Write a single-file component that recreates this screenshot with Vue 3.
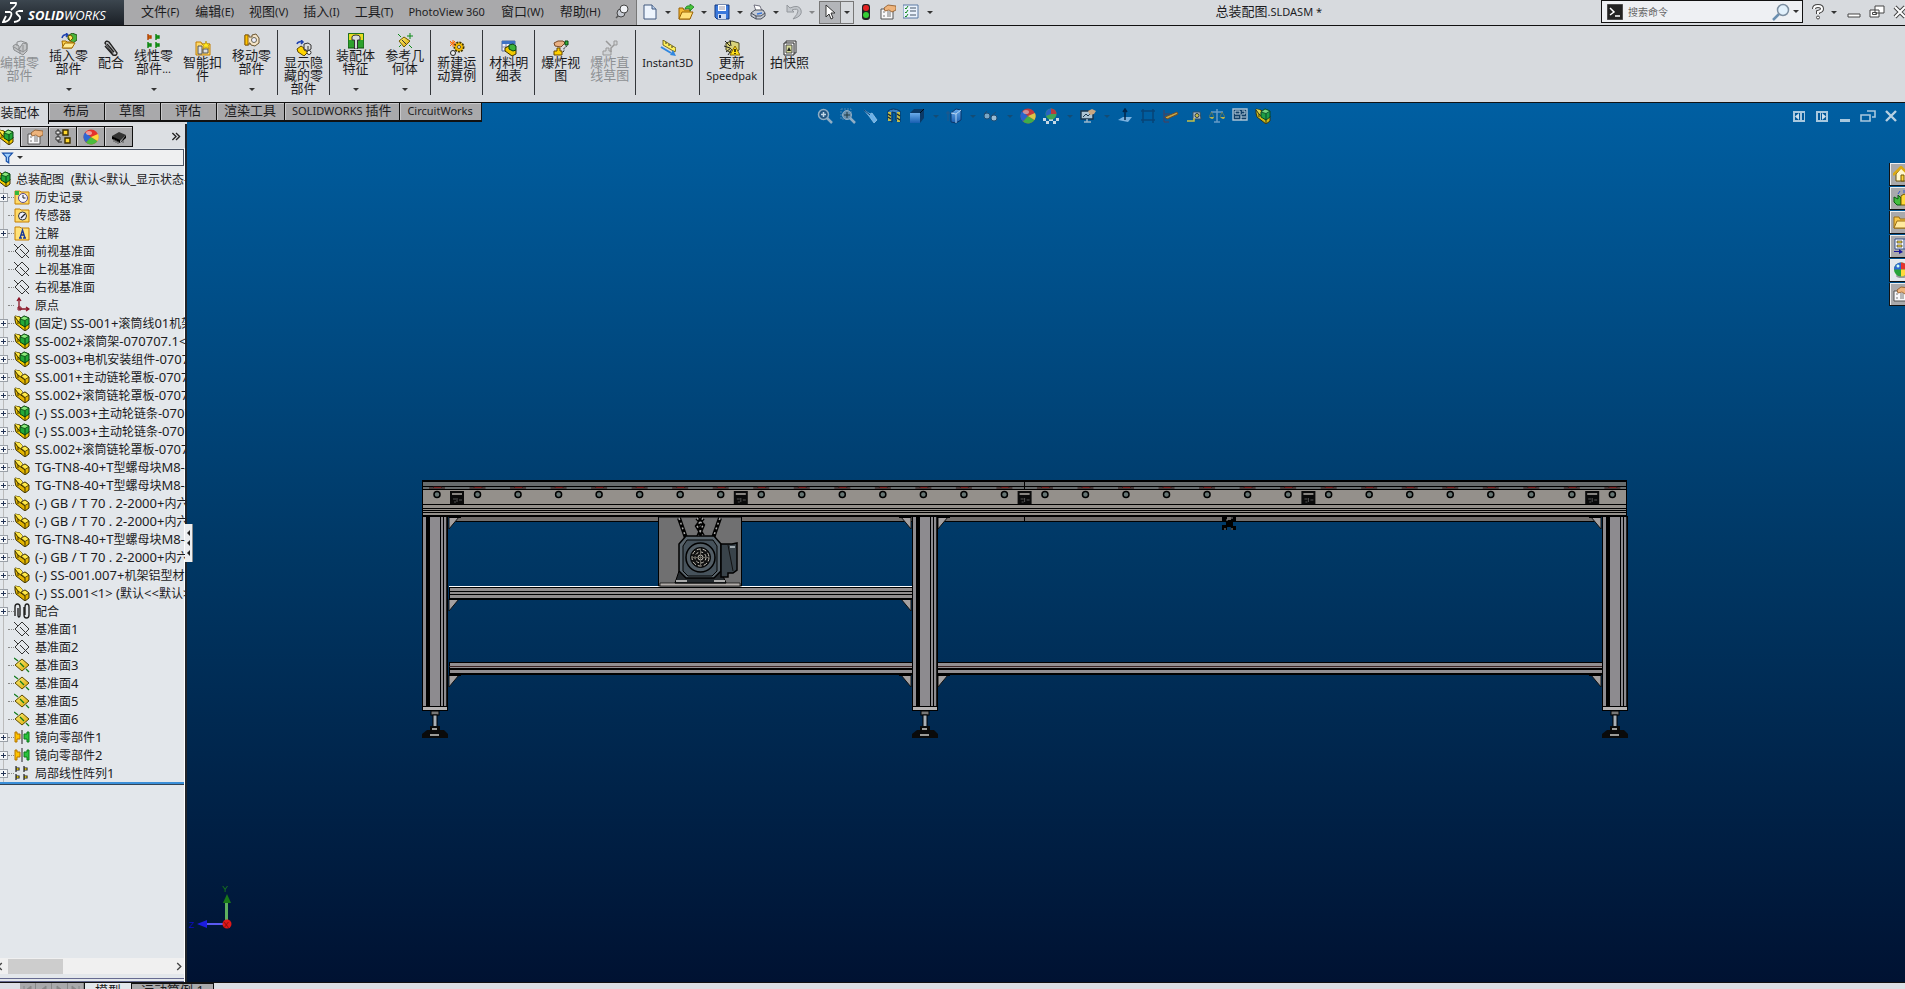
<script setup>
import { h } from 'vue'

// Splits a label into Latin and Chinese runs so that each can carry its own size.
const Label = (props) =>
  h('span', { class: 'label' },
    (props.text.match(/[\x20-\x7e]+|[^\x20-\x7e]+/g) || []).map((run) =>
      /^[\x20-\x7e]/.test(run) ? h('span', { class: 'latin' }, run) : run))
Label.props = ['text']

const menus = ['文件(F)', '编辑(E)', '视图(V)', '插入(I)', '工具(T)', 'PhotoView 360', '窗口(W)', '帮助(H)']

const quick = [
  { icon: 'new', name: '新建' }, { icon: 'open', name: '打开' }, { icon: 'save', name: '保存' },
  { icon: 'print', name: '打印' }, { icon: 'undo', name: '撤销', dim: true }
]

const ribbon = [
  [
    { icon: 'edit-part', lines: ['编辑零', '部件'], dim: true },
    { icon: 'insert', lines: ['插入零', '部件'], drop: true },
    { icon: 'clip', lines: ['配合'] },
    { icon: 'pattern', lines: ['线性零', '部件...'], drop: true },
    { icon: 'smart', lines: ['智能扣', '件'] },
    { icon: 'move', lines: ['移动零', '部件'], drop: true }
  ],
  [{ icon: 'show', lines: ['显示隐', '藏的零', '部件'] }],
  [
    { icon: 'feature', lines: ['装配体', '特征'], drop: true },
    { icon: 'refgeo', lines: ['参考几', '何体'], drop: true }
  ],
  [{ icon: 'motion', lines: ['新建运', '动算例'] }],
  [{ icon: 'bom', lines: ['材料明', '细表'] }],
  [
    { icon: 'explode', lines: ['爆炸视', '图'] },
    { icon: 'explode-line', lines: ['爆炸直', '线草图'], dim: true }
  ],
  [{ icon: 'instant', lines: ['Instant3D'] }],
  [{ icon: 'speedpak', lines: ['更新', 'Speedpak'] }],
  [{ icon: 'snapshot', lines: ['拍快照'] }]
]

const tabs = ['装配体', '布局', '草图', '评估', '渲染工具', 'SOLIDWORKS 插件', 'CircuitWorks']

const panelTabs = [
  { icon: 'asm', name: '设计树' }, { icon: 'props', name: '属性' }, { icon: 'config', name: '配置' },
  { icon: 'ball', name: '外观' }, { icon: 'chip', name: '电路' }
]

const tree = [
  ['folder-clock', '历史记录', 1], ['folder-gauge', '传感器', 0], ['folder-a', '注解', 1],
  ['plane', '前视基准面', 0], ['plane', '上视基准面', 0], ['plane', '右视基准面', 0], ['origin', '原点', 0],
  ['asm', '(固定) SS-001+滚筒线01机架', 1], ['asm', 'SS-002+滚筒架-070707.1<1>', 1],
  ['asm', 'SS-003+电机安装组件-070707', 1], ['part', 'SS.001+主动链轮罩板-070707', 1],
  ['part', 'SS.002+滚筒链轮罩板-070707', 1], ['asm', '(-) SS.003+主动轮链条-070707', 1],
  ['asm', '(-) SS.003+主动轮链条-070707', 1], ['part', 'SS.002+滚筒链轮罩板-070707', 1],
  ['part', 'TG-TN8-40+T型螺母块M8-40', 1], ['part', 'TG-TN8-40+T型螺母块M8-40', 1],
  ['part', '(-) GB / T 70 . 2-2000+内六角', 1], ['part', '(-) GB / T 70 . 2-2000+内六角', 1],
  ['part', 'TG-TN8-40+T型螺母块M8-40', 1], ['part', '(-) GB / T 70 . 2-2000+内六角', 1],
  ['part', '(-) SS-001.007+机架铝型材', 1], ['part', '(-) SS.001<1> (默认<<默认>', 1],
  ['mates', '配合', 1], ['plane', '基准面1', 0], ['plane', '基准面2', 0],
  ['plane-y', '基准面3', 0], ['plane-y', '基准面4', 0], ['plane-y', '基准面5', 0], ['plane-y', '基准面6', 0],
  ['mirror', '镜向零部件1', 1], ['mirror', '镜向零部件2', 1], ['local', '局部线性阵列1', 1]
]

const hud = [
  ['zoom-fit'], ['zoom-area'], ['telescope'], ['section'], ['cube', 1], ['style', 1], ['glasses', 1],
  ['ball'], ['scene', 1], ['monitor', 1], ['normal'], ['frame'], ['sketch'], ['tape'], ['scale'], ['sheet'], ['asm']
]

const taskTabs = ['home', 'library', 'folder', 'palette', 'globe', 'props']

const rollers = Array.from({ length: 30 }, (_, i) => 437 + i * 40.53)
const blocks = Array.from({ length: 5 }, (_, i) => 450 + i * 283.8)
const legs = [422, 912, 1602]
const gussets = [
  [449, 517, 1], [911, 517, -1], [938, 517, 1], [1601, 517, -1],
  [449, 599, 1], [911, 599, -1],
  [449, 675, 1], [911, 675, -1], [938, 675, 1], [1601, 675, -1]
]
const nav = ['M4 3v8M11 3L6 7l5 4z', 'M10 3L5 7l5 4z', 'M5 3l5 4-5 4z', 'M11 3v8M4 3l5 4-5 4z']
</script>

<template>
  <div class="app">
    <svg class="defs" aria-hidden="true">
      <defs>
        <linearGradient id="gy" x1="0" y1="0" x2="1" y2="1"><stop offset="0" stop-color="#fff27a" /><stop offset="1" stop-color="#d9a400" /></linearGradient>
        <linearGradient id="gb" x1="0" y1="0" x2="0" y2="1"><stop offset="0" stop-color="#7db9f8" /><stop offset="1" stop-color="#1c5fb4" /></linearGradient>
      </defs>
      <symbol id="i-part" viewBox="0 0 16 16"><path d="M1 1l5 1 2 2v3l3-2 4 3v5l-4 3-9-7-1-4z" fill="#e2b400" stroke="#3c3000" /><path d="M1 1l5 1 2 2v4L4 6z" fill="#ffe94a" /><path d="M7 7l4-2 4 3-4 2.500z" fill="#ffe94a" stroke="#3c3000" stroke-width=".8" /><path d="M1 2l3 4v3M4 6l7 5v4" fill="none" stroke="#3c3000" /></symbol>
      <symbol id="i-asm" viewBox="0 0 16 16"><path d="M1 1l5 1 2 2v3l3-2 4 3v5l-4 3-9-7-1-4z" fill="#f0c800" stroke="#3c3000" /><path d="M1 1l4 1 1 5-2-1z" fill="#ffe94a" /><path d="M1 2l3 4v3M4 6l7 6v3" fill="none" stroke="#3c3000" /><path d="M6 4l4-3 5 2v6l-4 3-5-3z" fill="#22a838" stroke="#064412" /><path d="M6 4l4-3 5 2-4 2.500z" fill="#8bea7c" stroke="#064412" stroke-width=".8" /><path d="M11 5.500V12" stroke="#064412" /></symbol>
      <symbol id="i-edit-part" viewBox="0 0 16 16"><path d="M1 6l3-2 3 2v3l4-6 4 1v7l-4 4-9-5z" fill="#c4c6c8" stroke="#8c8e90" /><path d="M5 6V2l4-1 6 2v6l-4 3-5-3M11 5v6M2 7l6 4v3" fill="none" stroke="#8c8e90" /></symbol>
      <symbol id="i-insert" viewBox="0 0 16 16"><path d="M1 5q1-4 5-3M5 0l2 2-2 2" fill="none" stroke="#1c3fae" stroke-width="1.500" /><path d="M7 3l4-3 5 2v5l-4 3-5-4z" fill="#48b43c" stroke="#27581a" /><path d="M7 3l3-1 2 3-3 3z" fill="#ffe35c" stroke="#6b5700" /><path d="M1 8h4l1 1h6l-1 6H2z" fill="#ffd34c" stroke="#a26b00" /><path d="M1 15l3-5h10l-3 5z" fill="#ffec95" stroke="#a26b00" /></symbol>
      <symbol id="i-clip" viewBox="0 0 16 16"><path d="M2 6l8 9q4 1 4-2L6 2Q3 0 2 3l8 10M4 4l7 8" fill="none" stroke="#222" stroke-width="1.400" /><path d="M3 4l8 10M5 3l8 10" stroke="#999" stroke-width=".8" /></symbol>
      <symbol id="i-pattern" viewBox="0 0 16 16"><path d="M2 1v6M2 3h3v2H2" fill="#ffcf00" stroke="#b34000" stroke-width="1.400" /><path d="M10 1v6M10 3h3v2h-3M2 9v6M2 11h3v2H2M10 9v6M10 11h3v2h-3" fill="#3bd43b" stroke="#08830c" stroke-width="1.400" /></symbol>
      <symbol id="i-smart" viewBox="0 0 16 16"><path d="M1 2h5l1 2h8v11H1z" fill="#ffd968" stroke="#c47e00" /><path d="M3 6h4v8H3zM8 9h5v4H8z" fill="#dfe1e4" stroke="#555" /><path d="M11 1l1 3h3l-2 2 1 3-3-2-3 2 1-3-2-2h3z" fill="#ffe821" stroke="#aa8000" stroke-width=".6" /></symbol>
      <symbol id="i-move" viewBox="0 0 16 16"><path d="M1 2h4v2h3V2l4-1 3 4v5l-4 3-4-1-1-2H5v2H1z" fill="#f4e3c6" stroke="#6a5530" /><path d="M1 2h3v10H1z" fill="#ffc400" stroke="#936200" /><circle cx="10" cy="7" r="2.500" fill="#eef" stroke="#665" /></symbol>
      <symbol id="i-show" viewBox="0 0 16 16"><path d="M1 4q1-3 5-2M5 0l2 2-2 2" fill="none" stroke="#1c3fae" stroke-width="1.500" /><path d="M1 9l4-3 3 2v2l4 2-4 4-6-4z" fill="#ffd400" stroke="#5c4500" /><path d="M8 4l4-1 3 2v4l-3 2-4-2z" fill="#ddd" stroke="#333" /><path d="M12 6v4" stroke="#333" /><circle cx="13" cy="12.500" r="2" fill="#fff" stroke="#333" /></symbol>
      <symbol id="i-feature" viewBox="0 0 16 16"><path d="M0 1l2-1h12l2 1v14H0z" fill="#2da12d" stroke="#114f11" /><path d="M1 1h14v6H1z" fill="#e8dc20" /><path d="M4 4q0-2 4-2t4 2v3H9.500v9h-3V7H4z" fill="#d8dbe0" stroke="#333" /></symbol>
      <symbol id="i-refgeo" viewBox="0 0 16 16"><path d="M2 8l5-4 6 4-6 6z" fill="url(#gy)" stroke="#6f5a00" /><path d="M5 7l4 4" stroke="#333" /><path d="M13 0v6M10 3h6M1 1l3 3M15 15l-3-3M2 14l2-2" stroke="#0c8a18" /></symbol>
      <symbol id="i-motion" viewBox="0 0 16 16"><circle cx="10" cy="7" r="4.500" fill="#ffd000" stroke="#463800" stroke-dasharray="2 1" stroke-width="2" /><circle cx="10" cy="7" r="3.500" fill="#f6b800" /><circle cx="10" cy="7" r="1.500" fill="#fff" stroke="#553" /><circle cx="4" cy="13" r="2.500" fill="#eee" stroke="#222" /><path d="M4 0v7M1 3h6M1 1l5 5M6 1L1 6" stroke="#ff6a00" /></symbol>
      <symbol id="i-bom" viewBox="0 0 16 16"><path d="M1 1h13v10H1z" fill="#eef" stroke="#556a9a" /><path d="M1 1h13v3H1z" fill="#3f72c4" /><path d="M1 7h13M5 4v7" stroke="#889" /><path d="M4 8l4-2 7 4v4l-4 2-7-5z" fill="#f0c800" stroke="#3c3000" /><path d="M8 5l4-1 3 2v4l-3 1-4-2z" fill="#3eb43c" stroke="#064412" /></symbol>
      <symbol id="i-explode" viewBox="0 0 16 16"><path d="M1 3l4-2h5l2 2-4 4-6-1z" fill="#e9b184" stroke="#7a4a26" /><path d="M12 1h3v4h-3z" fill="#33b43c" stroke="#064412" /><path d="M1 11h3V8h3v3h2v4H1z" fill="#ffd000" stroke="#6a4b00" /><path d="M14 6l-3 2v3l-2 2" fill="none" stroke="#333" stroke-dasharray="2 1" /></symbol>
      <symbol id="i-explode-line" viewBox="0 0 16 16"><path d="M12 1h3v4h-3zM1 11h3V8h3v3h2v4H1z" fill="#d0d3d6" stroke="#999" /><path d="M12 5L9 8v4M4 1l5 5" fill="none" stroke="#999" stroke-width="1.500" /></symbol>
      <symbol id="i-instant" viewBox="0 0 16 16"><path d="M3 0l13 8-1 4L3 5z" fill="#ffef5a" stroke="#5c5200" stroke-width=".8" /><path d="M6 4V2M9 6V4M12 8V6" stroke="#333" /><path d="M1 7l10 6" stroke="#2f87e0" stroke-width="2" /><path d="M10 15l6 1-3-6z" fill="#2f87e0" /></symbol>
      <symbol id="i-speedpak" viewBox="0 0 16 16"><path d="M2 3l6-2 7 2v7l-6 4-7-4z" fill="#d8d27a" stroke="#4c4a20" /><path d="M0 6l6 2M1 1l5 5M2 12l5-4M6 0l1 6M4 15l4-6" stroke="#222" /><path d="M11 6l5 9H6z" fill="#ffe11a" stroke="#8a6a00" /><path d="M11 9v3M11 13v1" stroke="#000" stroke-width="1.400" /></symbol>
      <symbol id="i-snapshot" viewBox="0 0 16 16"><path d="M4 1h10v12H4z" fill="#eee" stroke="#333" /><path d="M2 3h10v12H2z" fill="#fff" stroke="#222" /><path d="M4 5h6v8H4z" fill="#d8dd9d" stroke="#444" /><path d="M5 11l2-4 2 4z" fill="#222" /></symbol>
      <symbol id="i-new" viewBox="0 0 16 16"><path d="M2 1h8l4 4v10H2z" fill="#edf4fd" stroke="#41597e" /><path d="M10 1v4h4" fill="#bcd0ea" stroke="#41597e" /></symbol>
      <symbol id="i-open" viewBox="0 0 16 16"><path d="M1 4h4l1 2h6v9H1z" fill="#f4b934" stroke="#996000" /><path d="M1 15l3-7h11l-3 7z" fill="#ffe07a" stroke="#996000" /><path d="M7 5q1-4 5-3V0l4 3-4 4V5q-3-1-5 0z" fill="#47c43c" stroke="#137017" stroke-width=".7" /></symbol>
      <symbol id="i-save" viewBox="0 0 16 16"><path d="M1 1h14v14H3l-2-2z" fill="#3a78dc" stroke="#153a80" /><path d="M4 1h8v6H4z" fill="#fff" /><path d="M5 3h6M5 5h6" stroke="#99a" /><path d="M4 10h8v5H4z" fill="#cfdcf2" /><path d="M5 11h2v3H5z" fill="#153a80" /></symbol>
      <symbol id="i-print" viewBox="0 0 16 16"><path d="M4 1l6 1 2 5H6z" fill="#fff" stroke="#556" stroke-width=".8" /><path d="M1 9l4-3h8l2 3v3l-4 3H6l-5-3z" fill="#c5cad3" stroke="#4a505c" /><path d="M1 9l5 3h5l4-3M6 12v3" fill="none" stroke="#4a505c" /><path d="M7 10l5-1" stroke="#3a78dc" stroke-width="1.500" /></symbol>
      <symbol id="i-undo" viewBox="0 0 16 16"><path d="M1 1v7h7L6 6q6-2 6 1t-5 8q10-3 8-9T4 4z" fill="#c2c6cb" stroke="#93979c" /></symbol>
      <symbol id="i-cursor" viewBox="0 0 16 16"><path d="M4 1v12l3-3 2 5 2-1-2-5h4z" fill="#fff" stroke="#333" /></symbol>
      <symbol id="i-traffic" viewBox="0 0 16 16"><rect x="4" width="8" height="16" rx="3" fill="#222" /><circle cx="8" cy="4" r="3" fill="#e32222" /><circle cx="8" cy="11" r="3" fill="#35cc35" /></symbol>
      <symbol id="i-props" viewBox="0 0 16 16"><path d="M1 5h12v10H1z" fill="#f8f8fa" stroke="#555" /><path d="M3 8h2M3 12h2M7 8h4M7 10h4M7 12h4" stroke="#777" /><path d="M4 4l4-3 8 1v4l-4 2-3-2-4 1z" fill="#eeb47c" stroke="#8b5523" stroke-width=".8" /></symbol>
      <symbol id="i-options" viewBox="0 0 16 16"><path d="M0 1h15v13H0z" fill="#eaf2fc" stroke="#5b7ba4" /><path d="M7 4h6M7 7h6M7 11h6" stroke="#456" /><path d="M2 4l1 1 2-3M2 8l1 1 2-3M2 12l1 1 2-3" fill="none" stroke="#128a1c" /></symbol>
      <symbol id="i-pin" viewBox="0 0 16 16"><path d="M2 14l5-5" stroke="#555" stroke-width="1.500" /><ellipse cx="7" cy="9" rx="4" ry="4" fill="#c6cad2" stroke="#444" /><circle cx="10" cy="5" r="4" fill="#f0f2f6" stroke="#444" /></symbol>
      <symbol id="i-config" viewBox="0 0 16 16"><path d="M3 0v13h4M3 4h5" fill="none" stroke="#222" /><path d="M8 1h5v5H8zM10 9h5v5h-5z" fill="#ffd72c" stroke="#3c2e00" stroke-width="1.400" /><path d="M1 2h4v3H1zM1 8h4v3H1z" fill="#eee" stroke="#333" /></symbol>
      <symbol id="i-ball" viewBox="0 0 16 16"><circle cx="8" cy="8" r="7.500" fill="#e5332c" /><path d="M8 8L2 3.500A7.500 7.500 0 0 0 3 13.600z" fill="#2f66d2" /><path d="M8 8l-5 5.600A7.500 7.500 0 0 0 14.500 12z" fill="#49bd3c" /><path d="M8 8l6.500 4A7.500 7.500 0 0 0 15 5z" fill="#ffd93a" /><ellipse cx="6" cy="4" rx="3" ry="2" fill="#fff" opacity=".5" /></symbol>
      <symbol id="i-globe" viewBox="0 0 16 16"><ellipse cx="9" cy="14" rx="6" ry="2" fill="#999" /><circle cx="8" cy="7.500" r="7" fill="#28a338" /><path d="M8 7.500V.5a7 7 0 0 0-7 7z" fill="#2f66d2" /><path d="M8 7.500V.5a7 7 0 0 1 7 7z" fill="#e5332c" /><path d="M8 7.500h7a7 7 0 0 1-7 7z" fill="#ffd93a" /><circle cx="5" cy="4" r="1.500" fill="#cfe" /></symbol>
      <symbol id="i-chip" viewBox="0 0 16 16"><path d="M1 7l7-4 7 3-6 6z" fill="#333" /><path d="M1 7v3l8 4v-3M9 14l6-5V6" fill="#000" /><path d="M3 10v3M5 11v3M7 12v3M12 11v3" stroke="#555" /></symbol>
      <symbol id="i-filter" viewBox="0 0 16 16"><path d="M2 2h12l-4.500 5v7l-3-2V7z" fill="#9fd0ff" stroke="#174fa8" stroke-width="1.500" /></symbol>
      <symbol id="i-folder-clock" viewBox="0 0 16 16"><path d="M1 2h5l1 1h8v12H1z" fill="#ffdb6a" stroke="#c47e00" /><path d="M1 2h4v4H1z" fill="#34b63b" /><circle cx="9" cy="9" r="4.500" fill="#f4f4ff" stroke="#5b4a8a" /><path d="M9 6v3h2.500" fill="none" stroke="#222" /></symbol>
      <symbol id="i-folder-gauge" viewBox="0 0 16 16"><path d="M1 2h5l1 1h8v12H1z" fill="#ffdb6a" stroke="#c47e00" /><circle cx="8.500" cy="9" r="4" fill="#eef" stroke="#333" /><path d="M7 11l4-4" stroke="#222" stroke-width="1.300" /></symbol>
      <symbol id="i-folder-a" viewBox="0 0 16 16"><path d="M1 2h5l1 1h8v12H1z" fill="#ffe27a" stroke="#c47e00" /><path d="M5 13h3M9 13h3M6 13l2.500-8L11 13M7 10h3" fill="none" stroke="#1a3a9a" stroke-width="1.400" /></symbol>
      <symbol id="i-folder" viewBox="0 0 16 16"><path d="M1 3h5l1 2h7v9H1z" fill="#f7c648" stroke="#9a6c10" /><path d="M1 14l3-7h12l-3 7z" fill="#ffeaa0" stroke="#9a6c10" /></symbol>
      <symbol id="i-plane" viewBox="0 0 16 16"><path d="M1 8l7-7 7 7-7 7zM0 1l4 4M6 6l5 5M12 12l3 3" fill="none" stroke="#333" /></symbol>
      <symbol id="i-plane-y" viewBox="0 0 16 16"><path d="M1 8l7-6 7 6-7 6z" fill="url(#gy)" stroke="#5c4a00" /><path d="M0 1l4 3M6 6l4 4M12 12l3 3" stroke="#127a1c" stroke-width="1.300" /></symbol>
      <symbol id="i-origin" viewBox="0 0 16 16"><path d="M5 12V2M3 4l2-3 2 3M5 12h9M12 10l3 2-3 2" fill="none" stroke="#8a1426" stroke-width="1.300" /><path d="M4 10h3v3H4z" fill="none" stroke="#8a1426" /></symbol>
      <symbol id="i-mates" viewBox="0 0 16 16"><path d="M1 13V4q0-3 2.500-3T6 4v8q0 2-1 2t-1-2V5M10 4v8q0 3 2.500 3t2.500-3V4q0-3-2-3t-2 3v8" fill="none" stroke="#222" stroke-width="1.400" /></symbol>
      <symbol id="i-mirror" viewBox="0 0 16 16"><path d="M1 3h2v2h3v5H3v3H1z" fill="#ffc400" stroke="#b37400" /><path d="M15 3h-2v2h-3v5h3v3h2z" fill="#28c43a" stroke="#0a7a18" /><path d="M8 1v14" stroke="#222" /></symbol>
      <symbol id="i-local" viewBox="0 0 16 16"><path d="M2 1v6M2 3h3v2H2M10 1v6M10 3h3v2h-3M2 9v6M2 11h3v2H2M10 9v6M10 11h3v2h-3" fill="#ffe100" stroke="#222" stroke-width="1.200" /><path d="M3 3.500h1.500v1H3zM11 3.500h1.500v1H11zM3 11.500h1.500v1H3zM11 11.500h1.500v1H11z" fill="#ffe100" /></symbol>
      <symbol id="i-zoom-fit" viewBox="0 0 16 16"><path d="M10 10l5 5" stroke="#a9bccb" stroke-width="2.500" /><circle cx="6.500" cy="6.500" r="5" fill="#29557c" stroke="#a9bccb" stroke-width="1.500" /><path d="M6.500 4v5M4 6.500h5" stroke="#e4eef5" stroke-width="1.500" /></symbol>
      <symbol id="i-zoom-area" viewBox="0 0 16 16"><path d="M1 1h10v10H1z" fill="none" stroke="#5d8db4" stroke-dasharray="2 1" /><path d="M10 10l5 5" stroke="#a9bccb" stroke-width="2.500" /><circle cx="7" cy="7" r="4.500" fill="#7c9ab2" stroke="#a9bccb" /><path d="M7 4v6M4 7h6" stroke="#233" /></symbol>
      <symbol id="i-telescope" viewBox="0 0 16 16"><path d="M1 2l6 4 2-1 5 7-3 3-5-7z" fill="#7fc0f4" stroke="#b9dcf6" stroke-width=".7" /><path d="M1 2l6 5" stroke="#123a6a" /></symbol>
      <symbol id="i-section" viewBox="0 0 16 16"><path d="M2 3q5-4 12 0v11l-4-2V5L6 4v10l-4-2z" fill="#4688ca" stroke="#0b2c50" /><path d="M2 4h3v9H2zM11 4h3v10h-3z" fill="#e4cd3a" /><path d="M2 6l3 2M2 9l3 2M11 6l3 2M11 10l3 2" stroke="#222" stroke-width="1.500" /></symbol>
      <symbol id="i-cube" viewBox="0 0 16 16"><path d="M1 5l4-4h10v9l-4 5H1z" fill="#0e335c" /><path d="M1 5h10v10H1z" fill="url(#gb)" /><path d="M11 5l4-4" stroke="#000" /></symbol>
      <symbol id="i-style" viewBox="0 0 16 16"><path d="M5 5l5-4 5 1v10l-5 3-5-1z" fill="url(#gb)" stroke="#0d2f60" /><path d="M5 5l5 1 5-4M10 6v9" fill="none" stroke="#d5eaff" /><path d="M2 3v10M0 5h4" stroke="#2b5784" /></symbol>
      <symbol id="i-glasses" viewBox="0 0 16 16"><circle cx="4" cy="8" r="3" fill="#90b4cc" stroke="#264b6c" /><circle cx="11" cy="10" r="3" fill="#b5cddd" stroke="#264b6c" /><path d="M1 6l3-3M8 8l5-4" stroke="#264b6c" /></symbol>
      <symbol id="i-scene" viewBox="0 0 16 16"><path d="M0 10h3v3h3v-3h4v3h3v-3h3v3h-3v3h-3v-3H6v3H3v-3H0z" fill="#e8eef2" /><circle cx="8" cy="6" r="5.500" fill="#4db148" /><path d="M8 6V.5A5.500 5.500 0 0 0 3 8z" fill="#3164c8" /><path d="M8 6V.5A5.500 5.500 0 0 1 13.500 6z" fill="#d8342d" /></symbol>
      <symbol id="i-monitor" viewBox="0 0 16 16"><path d="M1 3h12v8H1z" fill="#c8d4dd" stroke="#1b2b3b" stroke-width="1.400" /><path d="M4 14h7M7 11v3" stroke="#b6c6d2" stroke-width="1.500" /><path d="M3 9l3-3 2 2 3-3" fill="none" stroke="#234" /><path d="M8 3l4-2 4 2-2 3-4 1z" fill="#eeb47c" /></symbol>
      <symbol id="i-normal" viewBox="0 0 16 16"><path d="M1 12l5-3h9l-4 5z" fill="#8fc0ea" /><path d="M8 12V1M6 4l2-3 2 3" fill="none" stroke="#041d3a" stroke-width="1.500" /></symbol>
      <symbol id="i-frame" viewBox="0 0 16 16"><path d="M3 1v14M13 1v14M1 3h14M1 12h14" fill="none" stroke="#0a4070" stroke-width="1.500" /></symbol>
      <symbol id="i-sketch" viewBox="0 0 16 16"><path d="M1 2v12h5M1 6h6" fill="none" stroke="#5c3b4c" /><path d="M2 9L14 4l1 2L4 11z" fill="#e4b43a" stroke="#8a4a10" /></symbol>
      <symbol id="i-tape" viewBox="0 0 16 16"><path d="M7 4h7l1 7H7z" fill="#c9ced2" stroke="#3b4d5d" /><circle cx="11" cy="7.500" r="2" fill="#e8d23a" stroke="#333" /><path d="M1 13h7v-3" fill="none" stroke="#e8d23a" stroke-width="1.500" /></symbol>
      <symbol id="i-scale" viewBox="0 0 16 16"><path d="M8 1v13M2 4h12M5 14h6" stroke="#78a7ce" stroke-width="1.500" /><path d="M0 9h5q-1 4-5 0zM11 9h5q-1 4-5 0z" fill="#dec23a" /><path d="M2.500 4L0 9M2.500 4L5 9M13 4l-2 5M13 4l3 5" stroke="#9a8a30" stroke-width=".7" /></symbol>
      <symbol id="i-sheet" viewBox="0 0 16 16"><path d="M1 1h14v11H1z" fill="#163a5c" stroke="#c9d6e0" stroke-width="1.400" /><path d="M3 3h5v3H3zM10 3h3v3h-3M3 9h4M9 9h5M9 6v6" fill="none" stroke="#dfe8ee" /></symbol>
      <symbol id="i-home" viewBox="0 0 16 16"><path d="M3 8v7h11V7L8 2z" fill="#fff7cf" stroke="#70560b" /><path d="M0 9l8-8 8 8" fill="none" stroke="#dba914" stroke-width="2.500" /><path d="M8 9h3v6H8z" fill="#ffd23a" stroke="#70560b" /></symbol>
      <symbol id="i-library" viewBox="0 0 16 16"><path d="M1 7l4 2V5l3 3v7H4l-3-3z" fill="#43bd3e" stroke="#0b5a12" /><path d="M8 6l3-2 4 2v9H8z" fill="#ffd83a" stroke="#715800" /><path d="M5 4l2-3M11 3V0" stroke="#35c" /></symbol>
      <symbol id="i-palette" viewBox="0 0 16 16"><path d="M2 1h13v10H2z" fill="#fff" stroke="#37538b" /><path d="M4 3h5v2H4zM4 7h5v2H4z" fill="#ffe23a" stroke="#333" stroke-width=".7" /><path d="M11 1v10" stroke="#37538b" /><path d="M1 13h5v-2l4 3-4 2v-2H1z" fill="#1a1a9c" /></symbol>
      <symbol id="i-search" viewBox="0 0 18 18"><path d="M7 11l-6 6" stroke="#6b8fb0" stroke-width="2.500" /><circle cx="11" cy="7" r="5.500" fill="#e2f1fc" stroke="#7c8ea0" stroke-width="1.500" /></symbol>
      <symbol id="i-help" viewBox="0 0 16 16"><path d="M4 5q0-3 4-3t4 3q0 2-4 3v2" fill="none" stroke="#444" stroke-width="4" /><path d="M4 5q0-3 4-3t4 3q0 2-4 3v2" fill="none" stroke="#fff" stroke-width="2" /><circle cx="8" cy="13.500" r="1.500" fill="#fff" stroke="#444" /></symbol>
      <symbol id="i-min" viewBox="0 0 16 16"><path d="M2 10h12v3H2z" fill="#fff" stroke="#444" /></symbol>
      <symbol id="i-restore" viewBox="0 0 16 16"><path d="M6 2h9v7H6zM1 6h9v7H1zM3.500 8.500h4v2h-4z" fill="#fff" stroke="#444" /></symbol>
      <symbol id="i-close" viewBox="0 0 16 16"><path d="M3 3l10 10M13 3L3 13" stroke="#444" stroke-width="4" /><path d="M3 3l10 10M13 3L3 13" stroke="#fff" stroke-width="2" /></symbol>
      <symbol id="i-dock-left" viewBox="0 0 16 16"><path d="M2 3h12v11H2z" fill="#a8c8de" /><path d="M4 5h5v7H4zM11 5h2v7h-2z" fill="#00589a" /><path d="M8 5L4 8.500 8 12z" fill="#cfe0ec" /></symbol>
      <symbol id="i-dock-right" viewBox="0 0 16 16"><path d="M2 3h12v11H2z" fill="#a8c8de" /><path d="M7 5h5v7H7zM4 5h2v7H4z" fill="#00589a" /><path d="M8 5l4 3.500L8 12z" fill="#cfe0ec" /></symbol>
      <symbol id="i-vmin" viewBox="0 0 16 16"><path d="M3 11h10v3H3z" fill="#a8c8de" /></symbol>
      <symbol id="i-vrestore" viewBox="0 0 16 16"><path d="M7 3h8v6h-3M1 7h9v6H1z" fill="none" stroke="#a8c8de" stroke-width="1.600" /></symbol>
      <symbol id="i-vclose" viewBox="0 0 16 16"><path d="M3 3l10 10M13 3L3 13" stroke="#b7d0e2" stroke-width="2.400" /></symbol>
    </svg>

    <header class="titlebar">
      <div class="brand">
        <svg class="ds" viewBox="0 0 22 22" fill="none" stroke="#fff" stroke-width="1.800">
          <path d="M8 1h6q1 2-5 7" /><path d="M3 10h5q3 1 0 6-2 4-7 4l3-6" /><path d="M21 9h-4q-4 1-2 3l3 3q1 4-6 5" />
        </svg>
        <span class="brand-name"><b>SOLID</b>WORKS</span>
      </div>
      <nav class="menus">
        <button v-for="m in menus" :key="m" class="menu"><Label :text="m" /></button>
        <button class="menu pin" aria-label="固定"><svg class="ic"><use href="#i-pin" /></svg></button>
      </nav>
      <div class="quick">
        <template v-for="q in quick" :key="q.icon">
          <button class="qb" :aria-label="q.name"><svg class="ic"><use :href="'#i-' + q.icon" /></svg></button>
          <button class="drop" :class="{ faded: q.dim }" :aria-label="q.name + '选项'"><i class="tri"></i></button>
        </template>
        <div class="select-tool">
          <button class="sel" aria-label="选择"><svg class="ic"><use href="#i-cursor" /></svg></button>
          <button class="drop" aria-label="选择选项"><i class="tri"></i></button>
        </div>
        <button class="qb" aria-label="重建"><svg class="ic"><use href="#i-traffic" /></svg></button>
        <button class="qb" aria-label="文件属性"><svg class="ic"><use href="#i-props" /></svg></button>
        <button class="qb" aria-label="选项"><svg class="ic"><use href="#i-options" /></svg></button>
        <button class="drop" aria-label="更多选项"><i class="tri"></i></button>
      </div>
      <h1 class="title"><Label text="总装配图.SLDASM *" /></h1>
      <div class="search">
        <svg class="prompt" viewBox="0 0 16 16"><path d="M0 0h16v16H0z" fill="#222" stroke="#777" /><path d="M3 4l4 4-4 3M8 12h5" fill="none" stroke="#fff" stroke-width="1.500" /></svg>
        <input type="text" placeholder="搜索命令" aria-label="搜索命令" />
        <button class="go" aria-label="搜索"><svg><use href="#i-search" /></svg></button>
        <button class="drop" aria-label="搜索选项"><i class="tri"></i></button>
      </div>
      <div class="window">
        <button aria-label="帮助"><svg class="ic"><use href="#i-help" /></svg></button>
        <button class="drop" aria-label="帮助选项"><i class="tri"></i></button>
        <button aria-label="最小化"><svg class="ic"><use href="#i-min" /></svg></button>
        <button aria-label="还原"><svg class="ic"><use href="#i-restore" /></svg></button>
        <button aria-label="关闭"><svg class="ic"><use href="#i-close" /></svg></button>
      </div>
    </header>

    <section class="ribbon">
      <div v-for="(group, g) in ribbon" :key="g" class="group">
        <button v-for="b in group" :key="b.icon" class="cmd" :class="{ dim: b.dim, high: b.drop }">
          <svg class="ic"><use :href="'#i-' + b.icon" /></svg>
          <Label v-for="l in b.lines" :key="l" :text="l" />
          <i v-if="b.drop" class="tri"></i>
        </button>
      </div>
    </section>

    <main class="work">
      <div class="tabs" role="tablist">
        <button v-for="(t, i) in tabs" :key="t" role="tab" class="tab" :class="{ on: i === 0 }"><Label :text="t" /></button>
      </div>

      <aside class="panel">
        <div class="ptabs">
          <button v-for="(p, i) in panelTabs" :key="p.icon" class="ptab" :class="{ on: i === 0 }" :aria-label="p.name">
            <svg class="ic"><use :href="'#i-' + p.icon" /></svg>
          </button>
          <button class="expand" aria-label="展开"><svg viewBox="0 0 10 10"><path d="M1 1l4 4-4 4M5 1l4 4-4 4" fill="none" stroke="#222" stroke-width="1.500" /></svg></button>
        </div>
        <button class="filter" aria-label="过滤"><svg><use href="#i-filter" /></svg><i class="tri"></i></button>
        <div class="root"><svg class="ic"><use href="#i-asm" /></svg><Label text="总装配图  (默认<默认_显示状态-1>)" /></div>
        <ul class="tree">
          <li v-for="(n, i) in tree" :key="i">
            <span class="branch"><i v-if="n[2]" class="plus"></i></span>
            <svg class="ic"><use :href="'#i-' + n[0]" /></svg>
            <Label :text="n[1]" />
          </li>
        </ul>
        <div class="rollback"></div>
        <div class="hscroll">
          <svg viewBox="0 0 6 10"><path d="M5 1L1 5l4 4" /></svg>
          <div class="track"><div class="thumb"></div></div>
          <svg viewBox="0 0 6 10"><path d="M1 1l4 4-4 4" /></svg>
        </div>
      </aside>

      <div class="canvas">
        <svg class="model" viewBox="187 103 1718 879">
          <g stroke="#000" shape-rendering="crispEdges">
            <path d="M449 517h1152v4H449z" fill="#716d6b" stroke="none" /><path d="M449 521.500h1152" />
            <path d="M422.500 480.500h1204v35h-1204z" fill="#94908b" />
            <path d="M423 481h1203v8H423z" fill="#686c6d" stroke="none" />
            <path d="M422 480.500h1205" stroke-width="2" />
            <path d="M422 486.500h1205M422 489.500h1205M422 504.500h1205M422 508.500h1205M422 510.500h1205M422 512.500h1205" />
            <path d="M422 516h1205" stroke-width="2" /><path d="M1024.500 481v8M1024.500 516v5" />
            <path d="M449 587.500h463v11H449z" fill="#928e8e" /><path d="M449 586.500h463" stroke="#fff" />
            <path d="M449 591.500h463M449 594.500h463" /><path d="M449 599h463" stroke-width="2" />
            <path d="M449 662.500h1153v11H449z" fill="#918e91" />
            <path d="M449 666.500h1153" stroke="#3a2424" /><path d="M449 669h1153M449 674h1153" stroke-width="2" />
          </g>
          <g v-for="x in rollers" :key="x">
            <path :d="`M${x - 8} 488h16M${x - 4} 487h9`" stroke="#2a0c0c" />
            <path :d="`M${x - 3} 487.500h7`" stroke="#7d2424" />
            <circle :cx="x" cy="494.500" r="3" fill="#667573" stroke="#000" stroke-width="1.500" />
          </g>
          <g v-for="x in blocks" :key="x">
            <rect :x="x" y="491" width="14" height="13" fill="#0a0a0a" />
            <path :d="`M${x + 2} 493h10v2h-10z`" fill="#878480" />
            <path :d="`M${x + 3} 499h3M${x + 7} 498v4M${x + 9} 500h3M${x + 4} 502h2`" stroke="#555" />
          </g>
          <g v-for="g in gussets" :key="g.join()">
            <path :d="`M${g[0]} ${g[1]}h${10 * g[2]}l${-10 * g[2]} 12z`" fill="#a5a1a1" stroke="#111" />
            <path :d="`M${g[0]} ${g[1]}h${12 * g[2]}`" stroke="#000" stroke-width="2" />
          </g>
          <g v-for="x in legs" :key="x">
            <g shape-rendering="crispEdges" stroke="#000">
              <rect :x="x + 0.5" y="516.500" width="25" height="190" fill="#8d8b8f" />
              <path :d="`M${x + 5} 517v189`" stroke-width="3" />
              <path :d="`M${x + 7.500} 517v189M${x + 18.500} 517v189M${x + 21.500} 517v189`" />
              <path :d="`M${x + 24.500} 517v189`" stroke="#222" />
              <rect :x="x + 0.5" y="706.500" width="25" height="4" fill="#b5b2b2" />
            </g>
            <rect :x="x + 9" y="711" width="8" height="4" fill="#777" stroke="#000" />
            <rect :x="x + 11" y="715" width="4" height="12" fill="#a9b0b7" stroke="#000" />
            <path :d="`M${x + 8} 726h10v4h4l4 4v4h-26v-4l5-4h3z`" fill="#0a0a0a" />
            <path :d="`M${x + 8} 735h9M${x + 10} 729h5`" stroke="#9b9b98" stroke-width="2" />
          </g>
          <g stroke="#000">
            <path d="M658.500 517h83v69h-83z" fill="#707071" />
            <path d="M660 583h80v3h-80z" fill="#b2adaa" stroke-width=".7" />
            <g fill="none" stroke-width="4"><path d="M679 518l7 20M720 518l-7 20M697 518l6 7-5 12M703 518l-6 8 6 10" /></g>
            <g fill="none" stroke="#aaa" stroke-width="1.500" stroke-dasharray="2 3"><path d="M679 518l7 20M720 518l-7 20M697 518l6 7-5 12M703 518l-6 8 6 10" /></g>
            <path d="M668 583l2-11h60l2 11z" fill="none" stroke="none" />
            <path d="M675 583l4-12h42l5 12z" fill="#252a2e" /><path d="M676 581h11M714 581h11" stroke="#aaa" stroke-width="2" />
            <path d="M686 536h28l7 8v27l-7 7h-28l-7-7v-27z" fill="#59646c" stroke-width="1.500" />
            <path d="M687 540h26l4 6v25l-5 5h-24l-5-5v-25z" fill="#46525b" />
            <path d="M721 544h11l5-1v27l-4 3h-5v4h-7z" fill="#39434a" stroke-width="1.500" /><path d="M728 545l5 26" stroke="#111" /><path d="M730 547h5" stroke="#a0a9ae" stroke-width="2" />
            <circle cx="700.500" cy="557.500" r="14.500" fill="#525d65" stroke-width="1.500" />
            <circle cx="700.500" cy="557.500" r="10" fill="#111" />
          </g>
          <g fill="none" stroke="#c9c5bb"><circle cx="700.500" cy="557.500" r="8.500" stroke-dasharray="4 2" /><circle cx="700.500" cy="557.500" r="5.500" stroke-dasharray="3 2" /><circle cx="700.500" cy="557.500" r="2.500" /><path d="M692 557.500h17M700.500 549v17" stroke="#68665f" /></g>
          <path d="M1222 517h5v3h4v-3h5v5h-3v4h3v4h-5v-3h-4v3h-5v-5h4v-4h-4z" fill="#000" /><path d="M1225 520l8 8M1233 520l-8 8" stroke="#000" stroke-width="2" /><path d="M1227 519v2M1232 528v2M1224 529h2M1231 518h2" stroke="#888" />
          <g class="triad">
            <path d="M226.500 924v-24" stroke="#5fb05f" stroke-width="3" /><path d="M223 903l4-9 4 9z" fill="#187818" />
            <path d="M226 924h-22" stroke="#5a5af2" stroke-width="2" /><path d="M207 920l-10 4 10 4z" fill="#1c1ce0" />
            <circle cx="227" cy="924" r="4.500" fill="#e01818" />
            <text x="222" y="892" fill="#187818">Y</text><text x="189" y="928" fill="#0c0cb8">Z</text><text x="223" y="928" fill="#8a0c0c">X</text>
          </g>
        </svg>
        <div class="hud">
          <template v-for="t in hud" :key="t[0]">
            <button class="hb" :aria-label="t[0]"><svg class="ic"><use :href="'#i-' + t[0]" /></svg></button>
            <button v-if="t[1]" class="hd" :aria-label="t[0] + ' menu'"><i class="tri"></i></button>
          </template>
        </div>
        <div class="docwin">
          <button aria-label="左窗格"><svg class="ic"><use href="#i-dock-left" /></svg></button>
          <button aria-label="右窗格"><svg class="ic"><use href="#i-dock-right" /></svg></button>
          <button aria-label="最小化文档"><svg class="ic"><use href="#i-vmin" /></svg></button>
          <button aria-label="还原文档"><svg class="ic"><use href="#i-vrestore" /></svg></button>
          <button aria-label="关闭文档"><svg class="ic"><use href="#i-vclose" /></svg></button>
        </div>
        <div class="task">
          <button v-for="(t, i) in taskTabs" :key="t" :class="{ on: i === 4 }" :aria-label="t"><svg class="ic"><use :href="'#i-' + t" /></svg></button>
        </div>
        <button class="handle" aria-label="折叠"><i></i><i></i><i></i></button>
      </div>
    </main>

    <footer class="bottom">
      <div class="nav"><button v-for="n in nav" :key="n" aria-label="滚动标签"><svg viewBox="0 0 15 14"><path :d="n" fill="#888" stroke="#888" /></svg></button></div>
      <button class="btab on"><Label text="模型" /></button>
      <button class="btab"><Label text="运动算例 1" /></button>
    </footer>
  </div>
</template>

<style>
html, body { overflow: hidden; }
.label { white-space: pre; }
.latin { font-size: var(--latin); }
</style>

<style scoped>
.app {
  --latin: 11px;
  position: relative;
  display: flex; flex-direction: column; height: 100vh; overflow: hidden;
  font: 13px/13px "Noto Sans", "Noto Sans CJK SC", sans-serif; color: #1c1c1e; background: #d7dade;
}
.app *, .app { box-sizing: border-box; }
.defs { position: absolute; width: 0; height: 0; }
button { all: unset; box-sizing: border-box; display: flex; align-items: center; justify-content: center; flex: none; cursor: default; }
.ic { width: 16px; height: 16px; flex: none; display: block; }
.tri { display: block; border: 3px solid transparent; border-top-color: #333; border-bottom: 0; width: 0; height: 0; }
.drop { width: 14px; height: 22px; }
.faded { opacity: .5; }

.titlebar { display: flex; height: 26px; flex: none; border-bottom: 1px solid #111; }
.brand { width: 124px; flex: none; display: flex; align-items: center; gap: 4px; padding-left: 2px; background: linear-gradient(#3c464f, #1b2026); color: #fff; }
.ds { width: 22px; height: 22px; flex: none; }
.brand-name { font-size: 14px; font-style: italic; line-height: 20px; padding-top: 4px; font-family: "Open Sans", "Noto Sans", sans-serif; }
.brand-name { font-size: 13px; }
.menus { display: flex; align-items: flex-start; padding: 0 1px 0 9px; background: #a9a9ab; border-right: 1px solid #777; }
.menu { padding: 0 8px; height: 23px; }
.menu:nth-child(n + 3):nth-child(-n + 6) { padding-left: 7px; }
.menu.pin { padding: 0 5px; }
.quick { display: flex; align-items: center; padding: 0 0 1px 2px; }
.qb { width: 22px; height: 22px; }
.qb + .qb { width: 23px; }
.select-tool { display: flex; height: 23px; border: 1px solid #777; margin: 0 1px 0 0; }
.sel { width: 21px; background: #b3b5b9; border-right: 1px solid #777; }
.select-tool .drop { height: 21px; width: 12px; }
.title { flex: 1; margin: 0; font-size: 13px; font-weight: 400; text-align: center; line-height: 22px; }
.search { display: flex; align-items: center; width: 202px; height: 23px; border: 1px solid #111; background: #eef0f3; padding-left: 5px; }
.prompt { width: 16px; height: 16px; flex: none; }
.search input { flex: 1; min-width: 0; border: 0; background: none; outline: 0; padding: 0 5px; font: 10px/20px "Noto Sans", "Noto Sans CJK SC", sans-serif; }
.search input::placeholder { color: #666; opacity: 1; }
.go svg { width: 18px; height: 18px; }
.search .drop { width: 12px; }
.window { display: flex; align-items: center; padding: 0 0 1px 6px; margin-right: -6px; }
.window button { width: 23px; }
.window button:first-child { width: 17px; }
.window .drop { width: 16px; }

.ribbon { display: flex; height: 76px; flex: none; margin-left: -5px; background: #d7dade; }
.group { display: flex; padding: 0 1px; margin: 4px 0 7px; }
.group:not(:last-child) { border-right: 1px solid #33363a; }
.group:first-child { padding-left: 0; }
.cmd { flex-direction: column; justify-content: flex-start; padding: 10px 5px 0; height: 65px; }
.cmd.high { padding-top: 3px; }
.cmd.dim { color: #8d9093; }
.cmd.high .tri { margin-top: auto; margin-bottom: 4px; }

.work { flex: 1; min-height: 0; display: grid; grid-template: 21px minmax(0, 1fr) / 187px minmax(0, 1fr); border-top: 1px solid #111; }
.tabs { grid-area: 1 / 1 / 2 / 3; justify-self: start; display: flex; z-index: 2; }
.tab { height: 19px; padding: 0 15px 2px 14px; background: #a9a9ab; border: 1px solid #111; border-width: 0 1px 2px 0; box-shadow: inset 1px 1px #c8c8ca; }
.tab:nth-child(n + 5) { padding: 0 8px 2px 7px; }
.tab.on { height: 21px; width: 49px; padding: 0 8px 3px 0; border: 0; border-right: 1px solid #111; background: #d7dade; box-shadow: none; }

.panel { --latin: 13px; grid-area: 2 / 1; display: flex; flex-direction: column; min-height: 0; background: #e3e7eb; border-right: 2px solid #20242a; box-shadow: inset -1px 0 #fff; overflow: hidden; font-size: 12px; }
.ptabs { display: flex; height: 24px; flex: none; align-items: flex-end; background: #dcdfe3; padding-bottom: 1px; }
.ptab { width: 28px; height: 21px; background: #a9a9ab; border: 1px solid #111; border-left: 0; box-shadow: inset 1px 1px #d5d5d8; }
.ptab.on { width: 21px; padding-right: 8px; background: #e3e7eb; border-bottom: 0; }
.expand { margin: 0 4px 6px auto; }
.expand svg { width: 10px; height: 9px; }
.filter { justify-content: flex-start; gap: 3px; height: 17px; margin: 1px 1px 4px 0; padding-left: 1px; border: 1px solid #4d5666; border-left: 0; background: #eff0f1; }
.filter svg { width: 13px; height: 14px; }
.root { display: flex; align-items: center; height: 18px; flex: none; margin-left: -5px; gap: 5px; }
.tree { list-style: none; margin: 0; padding: 0; flex: none; }
.tree li { display: flex; align-items: center; height: 18px; white-space: pre; }
.tree .ic { margin-right: 5px; }
.branch { width: 14px; height: 18px; flex: none; display: flex; align-items: center; background: linear-gradient(#bbb, #bbb) 3px 0 / 1px 100% no-repeat; position: relative; }
.branch::after { content: ""; width: 6px; border-top: 1px dotted #888; margin-left: auto; }
.plus { width: 8px; height: 9px; border: 1px solid #9aa0a8; border-left: 0; background: linear-gradient(#235, #235) 1px 3px / 5px 1px no-repeat, linear-gradient(#235, #235) 3px 1px / 1px 5px no-repeat, #f4f6f8; }
.rollback { height: 3px; flex: none; background: #3b8fd8; border-bottom: 1px solid #345; margin-right: 1px; }
.hscroll { margin: auto 1px 8px 0; height: 16px; flex: none; display: flex; align-items: center; gap: 5px; background: #f0f0f0; padding-right: 2px; box-shadow: 0 4px #e3e7eb, 0 5px #666a90, 0 7px #e3e7eb, 0 8px #666a90; }
.hscroll svg { width: 6px; height: 9px; fill: none; stroke: #444; stroke-width: 1.500; }
.hscroll svg:first-child { margin-left: -3px; }
.track { flex: 1; height: 15px; }
.thumb { width: 34%; height: 15px; background: #cdcdcd; }

.canvas { grid-area: 1 / 2 / 3 / 3; position: relative; min-height: 0; background: linear-gradient(#005fa2, #003764 52%, #001232); }
.model { position: absolute; inset: 0; width: 100%; height: 100%; }
.triad text { font: 9px "Liberation Sans", sans-serif; }
.hud { position: relative; display: flex; justify-content: center; align-items: center; height: 26px; padding-right: 4px; }
.hb { width: 23px; opacity: .85; }
.hd { width: 14px; opacity: .4; }
.docwin { position: absolute; right: 3px; top: 5px; display: flex; }
.docwin button { width: 23px; height: 16px; }
.task { position: absolute; right: -4px; top: 60px; display: flex; flex-direction: column; gap: 1px; }
.task button { width: 20px; height: 23px; padding-left: 2px; background: #a9a9ab; border: 1px solid #111; border-width: 0 0 1px 1px; box-shadow: inset 1px 1px #eee; }
.task button.on { background: #e3e7eb; }
.handle { position: absolute; left: -2px; top: 421px; width: 8px; height: 38px; flex-direction: column; gap: 4px; background: #eceef0; border-right: 1px solid #888; }
.handle i { border: 3px solid transparent; border-right: 3px solid #222; border-left: 0; }

.bottom { display: flex; height: 7px; flex: none; align-items: flex-start; padding-left: 20px; border-top: 1px solid #111; overflow: hidden; background: #dcdfe4; }
.nav { display: flex; border-right: 1px solid #111; background: #a9a9ab; }
.nav button { width: 16px; border-right: 1px solid #888; }
.nav svg { width: 15px; height: 14px; }
.btab { --latin: 13px; padding: 0 9px; height: 15px; background: #a9a9ab; border: 1px solid #111; }
.btab.on { background: #e3e7eb; border-color: transparent; }
</style>
